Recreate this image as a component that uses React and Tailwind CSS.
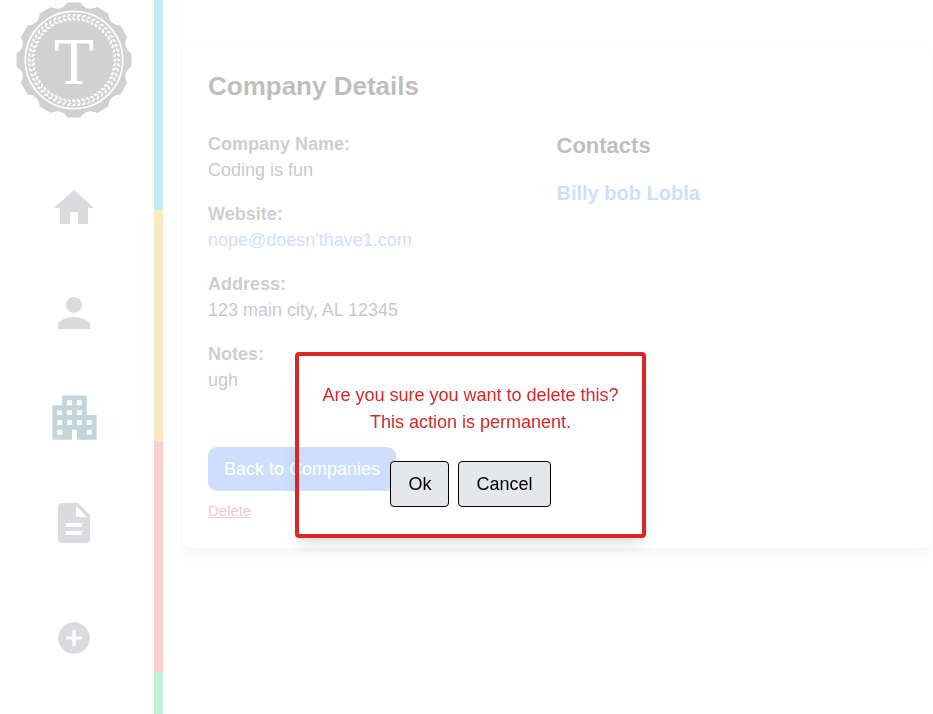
import {
  MdAddCircle,
  MdApartment,
  MdDescription,
  MdHome,
  MdPerson,
} from "react-icons/md";

const polar = (radius, degrees) => {
  const a = ((degrees - 90) * Math.PI) / 180;
  return `${(radius * Math.cos(a)).toFixed(2)} ${(radius * Math.sin(a)).toFixed(2)}`;
};

// Twelve flat teeth joined by shallow scallops.
const sealEdge =
  Array.from({ length: 12 }, (_, i) => {
    const c = i * 30;
    return `${i ? "L" : "M"}${polar(57.8, c - 6.5)}L${polar(57.8, c + 6.5)}Q${polar(49.5, c + 15)} ${polar(57.8, c + 23.5)}`;
  }).join("") + "Z";

const leaves = Array.from({ length: 56 }, (_, i) => (i * 360) / 56);

function Logo() {
  return (
    <svg viewBox="-58 -58 116 116" className="size-29" role="img" aria-label="T">
      <path d={sealEdge} fill="#4a4a4a" />
      <circle r="48.7" fill="none" stroke="#fff" strokeWidth="1.7" />
      {leaves.map((angle) => (
        <g key={angle} transform={`rotate(${angle})`} fill="#fff">
          <path d="M-1.8 -43.2C-1.8 -45.6 0 -46.6 1.8 -46.2C2.2 -44.4 0.4 -43 -1.8 -43.2Z" />
          <path d="M-1.8 -42.6C-1.8 -40.2 0 -39 1.8 -39.4C2.2 -41.2 0.4 -42.8 -1.8 -42.6Z" />
        </g>
      ))}
      <text
        y="24"
        textAnchor="middle"
        fill="#fff"
        className="font-['DejaVu_Serif',serif] text-[59px]"
      >
        T
      </text>
    </svg>
  );
}

const navItems = [
  { label: "Home", Icon: MdHome, style: "text-[#6b7280] text-[48px]" },
  { label: "Contacts", Icon: MdPerson, style: "text-[#6b7280] text-[48px]" },
  { label: "Companies", Icon: MdApartment, style: "text-[#155e75] text-[59px]" },
  { label: "Notes", Icon: MdDescription, style: "text-[#6b7280] text-[48px]" },
  { label: "Add", Icon: MdAddCircle, style: "mt-2.5 text-[#6b7280] text-[38px]" },
];

function Sidebar() {
  return (
    <aside className="flex w-[154px] shrink-0 flex-col items-center pt-0.5 pr-1.5">
      <Logo />
      <nav className="mt-[37px] flex flex-col">
        {navItems.map(({ label, Icon, style }) => (
          <a
            key={label}
            href="#"
            aria-label={label}
            className={`flex h-[105px] items-center justify-center ${style}`}
          >
            <Icon />
          </a>
        ))}
      </nav>
    </aside>
  );
}

function ColorBar() {
  return (
    <div className="flex w-[9px] shrink-0 flex-col">
      <div className="h-[210px] bg-[#06b6d4]" />
      <div className="h-[231px] bg-[#eab308]" />
      <div className="h-[231px] bg-[#ef4444]" />
      <div className="flex-1 bg-[#22c55e]" />
    </div>
  );
}

function Field({ label, children }) {
  return (
    <div>
      <dt className="font-bold text-[#374151]">{label}</dt>
      <dd className="text-[#1f2937]">{children}</dd>
    </div>
  );
}

function CompanyCard() {
  return (
    <section className="rounded-[9px] border border-[#e5e7eb] bg-white p-[26px] shadow-lg">
      <h1 className="text-[26px] leading-[35px] font-bold text-black">
        Company Details
      </h1>
      <div className="mt-[27px] grid grid-cols-2">
        <dl className="flex flex-col gap-[18px] text-[18px] leading-[26px]">
          <Field label="Company Name:">Coding is fun</Field>
          <Field label="Website:">
            <a href="#" className="text-[#3b82f6]">
              nope@doesn'thave1.com
            </a>
          </Field>
          <Field label="Address:">123 main city, AL 12345</Field>
          <Field label="Notes:">ugh</Field>
        </dl>
        <div>
          <h2 className="text-[22px] leading-[30px] font-bold text-black">
            Contacts
          </h2>
          <a
            href="#"
            className="mt-[17px] inline-block text-[20px] leading-[30px] font-bold text-[#3b82f6]"
          >
            Billy bob Lobla
          </a>
        </div>
      </div>
      <div className="mt-[54px] flex flex-col items-start">
        <button className="h-11 rounded-[9px] bg-[#3b82f6] px-4 text-[18px] text-white">
          Back to Companies
        </button>
        <button className="mt-[9px] text-[15px] leading-[22px] text-[#dc2626] underline">
          Delete
        </button>
      </div>
    </section>
  );
}

function ConfirmDialog() {
  return (
    <div className="fixed inset-0 flex items-center justify-center pt-44 pl-2">
      <div
        role="dialog"
        aria-labelledby="confirm-text"
        className="w-[351px] rounded-[4px] border-4 border-[#dc2626] pt-[26px] pb-[27px] text-center text-[18px] leading-[27px] shadow-lg"
      >
        <p id="confirm-text" className="text-[#dc2626]">
          Are you sure you want to delete this?
          <br />
          This action is permanent.
        </p>
        <div className="mt-[25px] flex justify-center gap-[9px] text-black">
          <button className="h-[46px] rounded-[4px] border border-black bg-[#e5e7eb] px-[17px]">
            Ok
          </button>
          <button className="h-[46px] rounded-[4px] border border-black bg-[#e5e7eb] px-[17px]">
            Cancel
          </button>
        </div>
      </div>
    </div>
  );
}

export default function App() {
  return (
    <div className="min-h-screen bg-white font-['Liberation_Sans',Arial,sans-serif]">
      <div className="flex min-h-screen opacity-25">
        <Sidebar />
        <ColorBar />
        <main className="flex-1 pt-[42px] pr-px pl-[18px]">
          <CompanyCard />
        </main>
      </div>
      <ConfirmDialog />
    </div>
  );
}
